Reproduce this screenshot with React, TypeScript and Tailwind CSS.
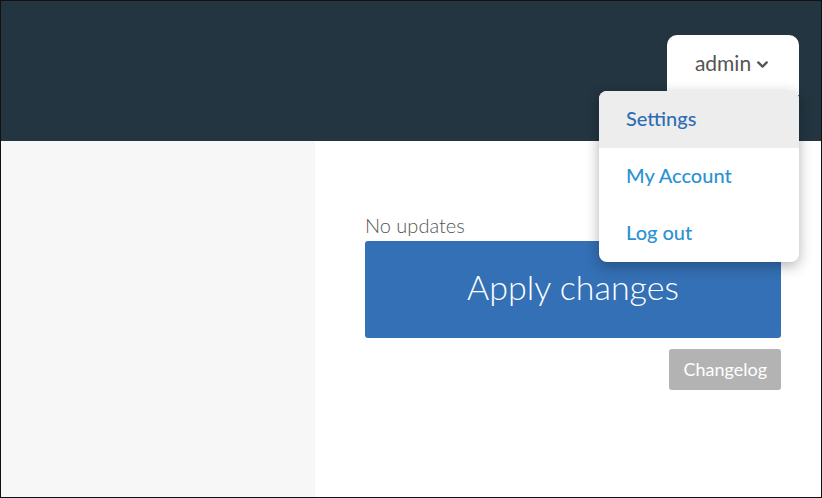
import { ChevronDown } from 'lucide-react';

export default function App() {
  const items = [
    { label: 'Settings', active: true },
    { label: 'My Account', active: false },
    { label: 'Log out', active: false },
  ];

  return (
    <div
      className="relative w-[822px] h-[498px] border border-[#111] flex flex-col overflow-hidden"
      style={{ fontFamily: 'Lato, "Noto Sans", sans-serif' }}
    >
      {/* Header */}
      <div className="h-[140px] shrink-0 bg-[#233540]" />

      {/* Body */}
      <div className="flex flex-1">
        <div className="w-[314px] bg-[#f7f7f7]" />
        <div className="flex-1 bg-white pl-[50px] pr-[40px] pt-[71px]">
          <div className="text-[20px] leading-[26px] font-light text-[#555]">No updates</div>
          <button className="w-full h-[97px] mt-[3px] pb-[7px] bg-[#3470b5] rounded-[3px] text-white text-[34px] font-light">
            Apply changes
          </button>
          <div className="flex justify-end mt-[11px]">
            <button className="h-[41px] px-[14px] bg-[#b3b3b3] rounded-[3px] text-white text-[18px] font-normal">
              Changelog
            </button>
          </div>
        </div>
      </div>

      {/* User menu tab */}
      <div className="absolute top-[34px] right-[22px] w-[132px] h-[60px] bg-white rounded-t-[10px] flex justify-center items-start pt-[15px]">
        <span className="text-[21px] leading-[26px] text-[#555] flex items-center gap-[3px]">
          admin
          <ChevronDown size={17} strokeWidth={3.2} className="mt-[2px]" />
        </span>
      </div>

      {/* Dropdown */}
      <div className="absolute top-[90px] right-[22px] w-[200px] bg-white rounded-[8px] shadow-[0_4px_14px_rgba(0,0,0,0.3)] overflow-hidden">
        {items.map(item => (
          <div
            key={item.label}
            className={
              item.active
                ? 'h-[57px] flex items-center pl-[27px] pb-[4px] bg-[#ededed] text-[#2e6db4] text-[20px] font-medium'
                : 'h-[57px] flex items-center pl-[27px] pb-[3px] text-[#2b92d3] text-[20px] font-medium'
            }
          >
            {item.label}
          </div>
        ))}
      </div>
    </div>
  );
}
